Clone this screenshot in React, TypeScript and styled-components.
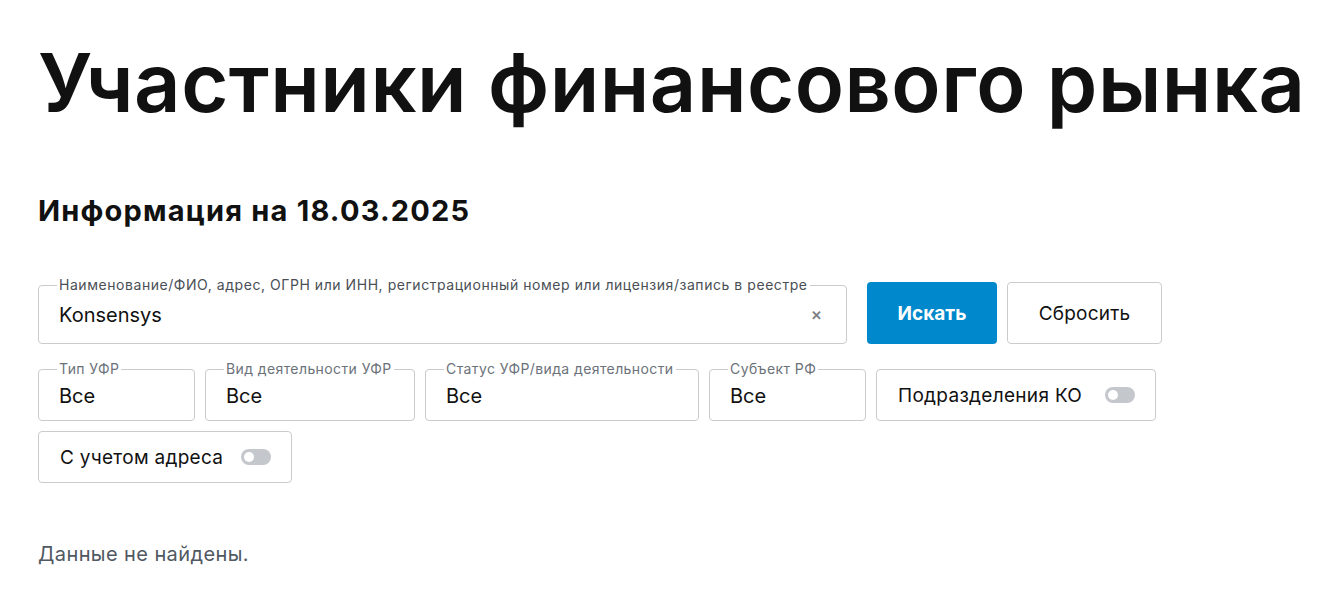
import React, { useState } from 'react';
import styled, { createGlobalStyle } from 'styled-components';

const GlobalStyle = createGlobalStyle`
  body {
    margin: 0;
    background: #ffffff;
    font-family: Inter, "Noto Sans", sans-serif;
    color: #111111;
  }
`;

interface selectI {
  label: string
  value: string
  width: number
}

const selects: selectI[] = [
  { label: 'Тип УФР', value: 'Все', width: 157 },
  { label: 'Вид деятельности УФР', value: 'Все', width: 210 },
  { label: 'Статус УФР/вида деятельности', value: 'Все', width: 274 },
  { label: 'Субъект РФ', value: 'Все', width: 157 },
];

const Toggle = ({ on, onClick }: { on: boolean, onClick: () => void }) => (
  <ToggleTrack $on={on} onClick={onClick}>
    <ToggleKnob $on={on} />
  </ToggleTrack>
);

const App = () => {
  const [query, setQuery] = useState('Konsensys');
  const [koOn, setKoOn] = useState(false);
  const [addrOn, setAddrOn] = useState(false);

  return (
    <>
      <GlobalStyle />
      <Page>
        <Title>Участники финансового рынка</Title>
        <SubTitle>Информация на 18.03.2025</SubTitle>

        <SearchRow>
          <Field $width={809} $height={59}>
            <Legend>Наименование/ФИО, адрес, ОГРН или ИНН, регистрационный номер или лицензия/запись в реестре</Legend>
            <SearchInput value={query} onChange={(e) => setQuery(e.target.value)} />
            <ClearBtn onClick={() => setQuery('')}>✕</ClearBtn>
          </Field>
          <SearchBtn>Искать</SearchBtn>
          <ResetBtn onClick={() => setQuery('')}>Сбросить</ResetBtn>
        </SearchRow>

        <FilterRow>
          {selects.map((s) => (
            <Field key={s.label} $width={s.width} $height={52}>
              <Legend $small>{s.label}</Legend>
              <SelectValue>{s.value}</SelectValue>
            </Field>
          ))}
          <SwitchBox $width={280}>
            Подразделения КО
            <Toggle on={koOn} onClick={() => setKoOn(!koOn)} />
          </SwitchBox>
          <SwitchBox $width={254}>
            С учетом адреса
            <Toggle on={addrOn} onClick={() => setAddrOn(!addrOn)} />
          </SwitchBox>
        </FilterRow>

        <Empty>Данные не найдены.</Empty>
      </Page>
    </>
  );
};

export default App;

const Page = styled.div`
  display: flex;
  flex-direction: column;
  align-items: flex-start;
  padding: 28px 0 0 38px;
  width: 1170px;
`;

const Title = styled.h1`
  margin: 0;
  font-size: 81px;
  line-height: 110px;
  font-weight: 600;
  letter-spacing: 0.5px;
  color: #111111;
  white-space: nowrap;
`;

const SubTitle = styled.h2`
  margin: 56px 0 0 0;
  font-size: 29px;
  line-height: 34px;
  font-weight: 700;
  letter-spacing: 1.2px;
  color: #111111;
`;

const SearchRow = styled.div`
  display: flex;
  align-items: flex-end;
  gap: 10px;
  margin-top: 50px;
`;

const Field = styled.fieldset<{ $width: number, $height: number }>`
  position: relative;
  box-sizing: border-box;
  width: ${p => p.$width}px;
  height: ${p => p.$height + 7}px;
  margin: 0;
  padding: 0 20px;
  border: 1px solid #c9cbce;
  border-radius: 4px;
  display: flex;
  align-items: center;
`;

const Legend = styled.legend<{ $small?: boolean }>`
  margin-left: -2px;
  padding: 0 2px;
  font-size: 14px;
  line-height: 14px;
  letter-spacing: ${p => p.$small ? 0.4 : 0.55}px;
  color: ${p => p.$small ? '#6b727a' : '#4a4f55'};
  white-space: nowrap;
`;

const SearchInput = styled.input`
  flex: 1;
  border: none;
  outline: none;
  background: transparent;
  font-family: Inter, "Noto Sans", sans-serif;
  font-size: 20px;
  color: #111111;
  padding: 0;
  margin-top: -5px;
`;

const ClearBtn = styled.span`
  font-size: 13px;
  font-weight: 700;
  color: #7d8085;
  margin-top: -5px;
  margin-right: 4px;
  cursor: pointer;
`;

const SearchBtn = styled.button`
  width: 130px;
  height: 62px;
  margin-left: 10px;
  border: none;
  border-radius: 4px;
  background: #0088cc;
  color: #ffffff;
  font-family: Inter, "Noto Sans", sans-serif;
  font-size: 19px;
  font-weight: 700;
  cursor: pointer;
`;

const ResetBtn = styled.button`
  width: 155px;
  height: 62px;
  border: 1px solid #c9cbce;
  border-radius: 4px;
  background: #ffffff;
  color: #111111;
  font-family: Inter, "Noto Sans", sans-serif;
  font-size: 19px;
  font-weight: 400;
  letter-spacing: 0.2px;
  cursor: pointer;
`;

const FilterRow = styled.div`
  display: flex;
  flex-wrap: wrap;
  align-items: flex-end;
  gap: 10px 10px;
  width: 1130px;
  margin-top: 18px;
`;

const SelectValue = styled.div`
  font-size: 20px;
  color: #111111;
  margin-top: -4px;
`;

const SwitchBox = styled.div<{ $width: number }>`
  box-sizing: border-box;
  width: ${p => p.$width}px;
  height: 52px;
  border: 1px solid #c9cbce;
  border-radius: 4px;
  padding: 0 20px 0 21px;
  display: flex;
  align-items: center;
  justify-content: space-between;
  font-size: 19px;
  letter-spacing: 0.3px;
  color: #111111;
`;

const ToggleTrack = styled.span<{ $on: boolean }>`
  position: relative;
  width: 30px;
  height: 16px;
  border-radius: 8px;
  background: ${p => p.$on ? '#0088cc' : '#c4c7cc'};
  cursor: pointer;
`;

const ToggleKnob = styled.span<{ $on: boolean }>`
  position: absolute;
  top: 3px;
  left: ${p => p.$on ? 17 : 3}px;
  width: 10px;
  height: 10px;
  border-radius: 50%;
  background: #ffffff;
`;

const Empty = styled.p`
  margin: 59px 0 0 0;
  font-size: 20px;
  letter-spacing: 0.4px;
  color: #505862;
`;
